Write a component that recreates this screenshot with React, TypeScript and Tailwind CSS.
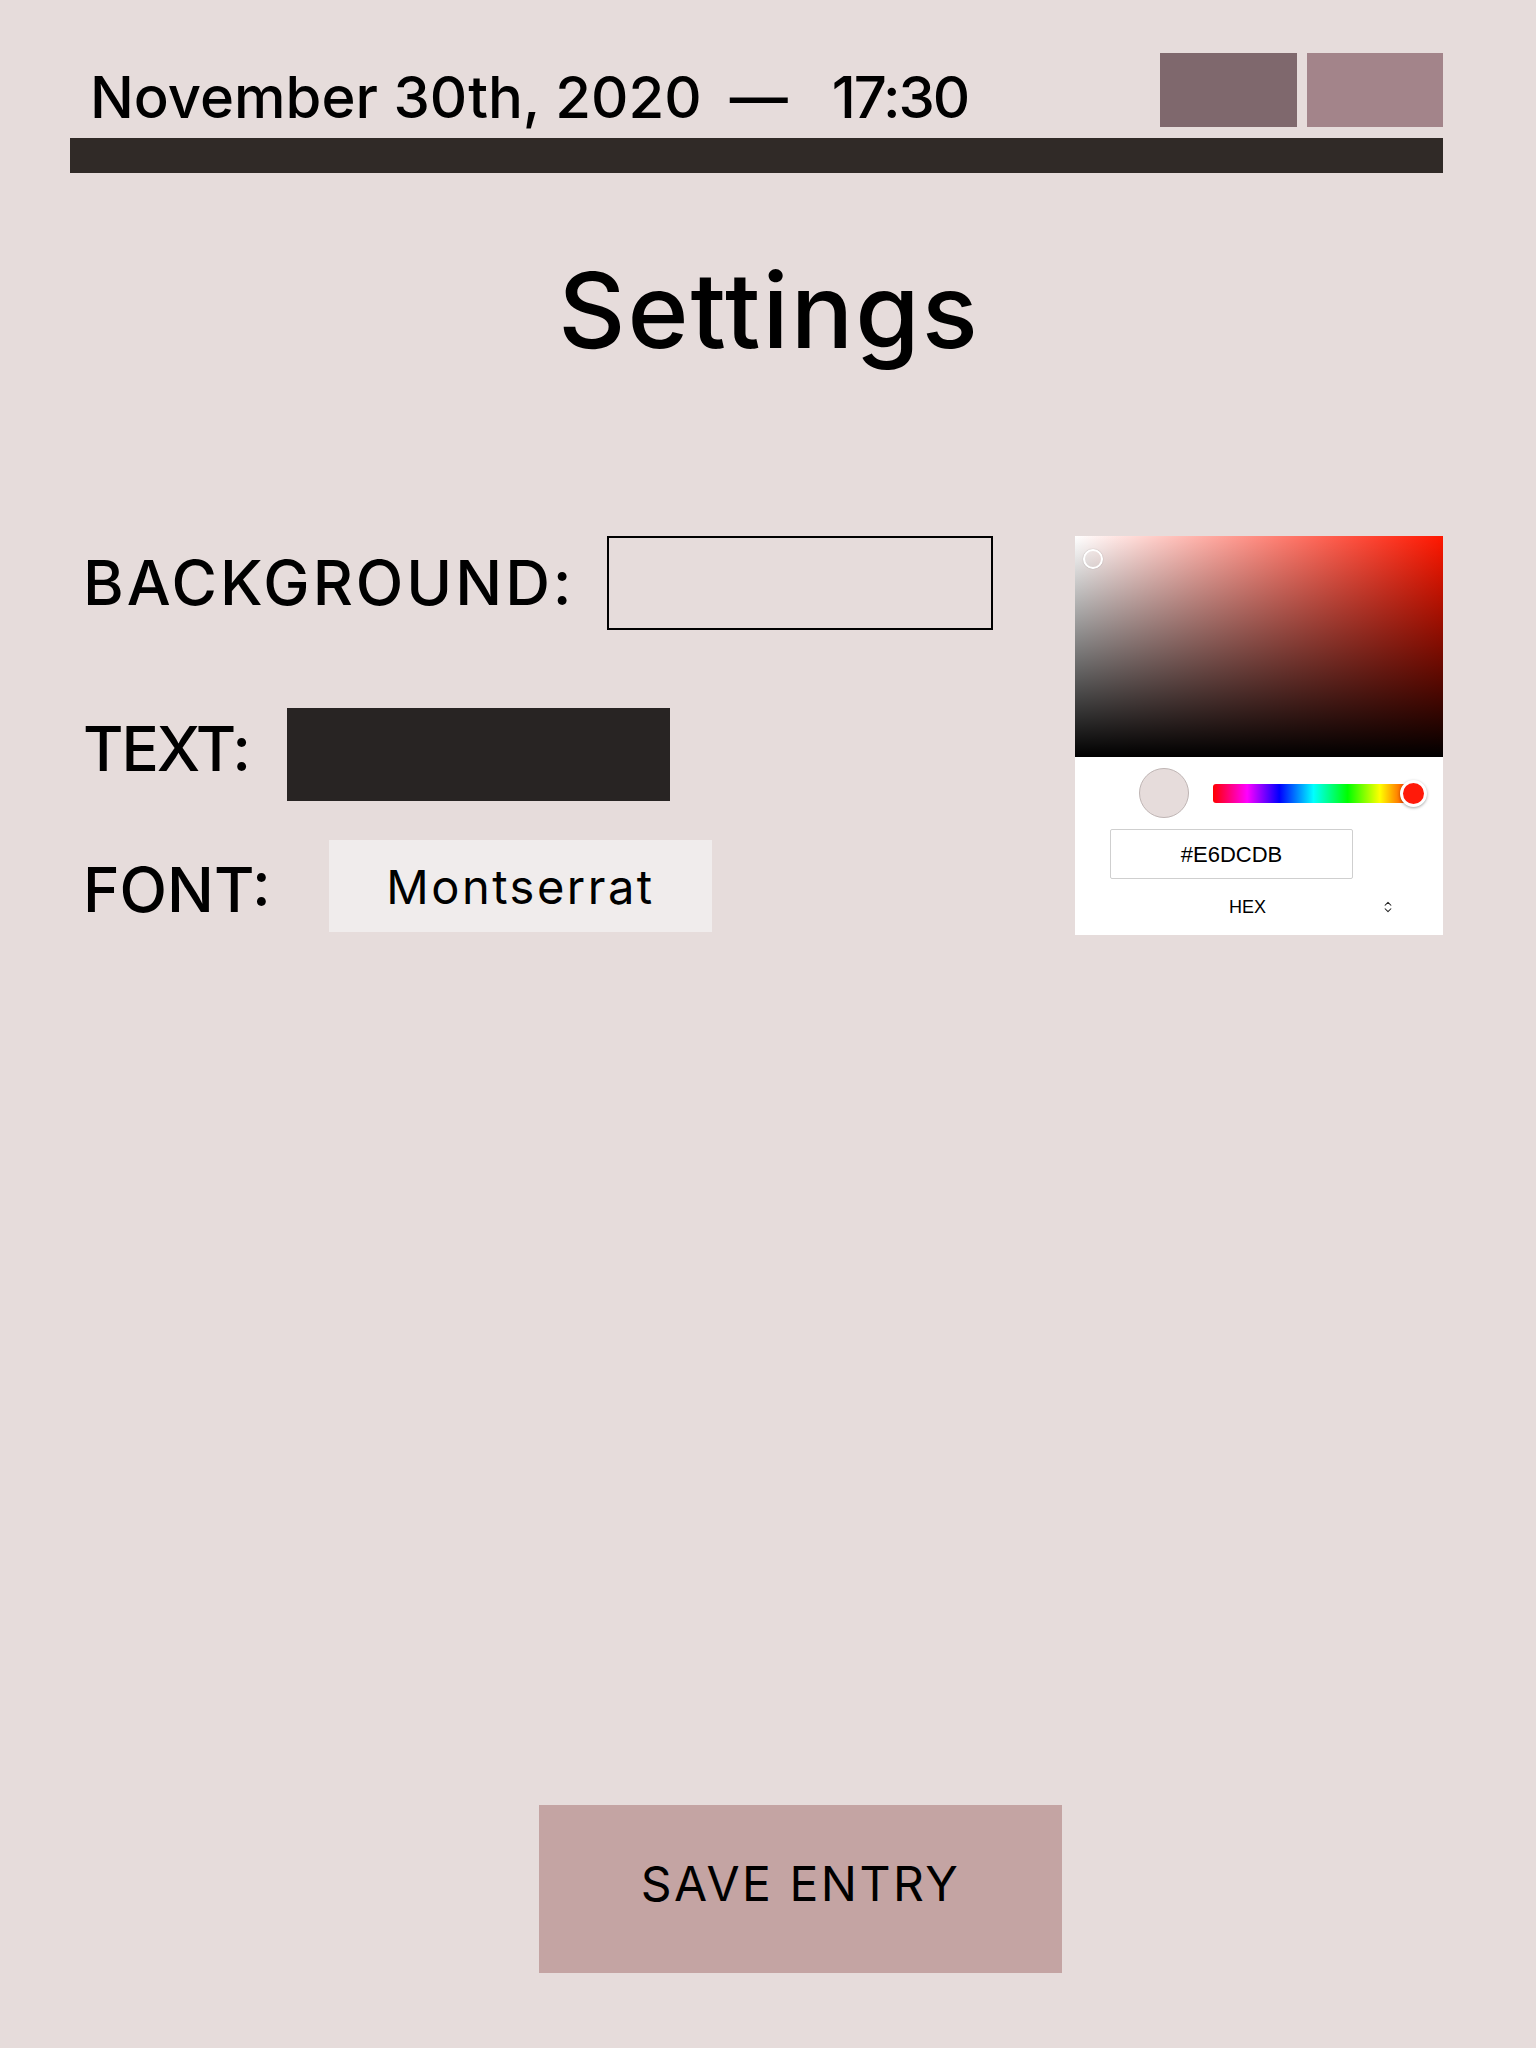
import { ChevronsUpDown } from 'lucide-react'

const font = { fontFamily: 'Inter, "Noto Sans", sans-serif' }

function ColorPicker() {
  return (
    <div className="w-[368px] bg-white">
      <div className="relative h-[221px] bg-[linear-gradient(to_right,#ffffff,#ff1700)]">
        <div className="absolute inset-0 bg-[linear-gradient(to_bottom,rgba(0,0,0,0),#000000)]" />
        <div className="absolute left-[8px] top-[13px] h-[20px] w-[20px] rounded-full border-2 border-white shadow-[0_0_1px_rgba(0,0,0,0.4)]" />
      </div>
      <div className="pb-[19px] pt-[11px]">
        <div className="flex items-center">
          <div className="ml-[64px] h-[50px] w-[50px] rounded-full border border-[#bfb5b4] bg-[#e6dcdb]" />
          <div className="relative ml-[24px] h-[19px] w-[201px] rounded-l-[3px] bg-[linear-gradient(to_right,#ff0000_0%,#ff00ff_17%,#0000ff_33%,#00ffff_50%,#00ff00_67%,#ffff00_83%,#ff8000_92%,#ff0000_100%)]">
            <div className="absolute right-[-13px] top-[-4px] h-[27px] w-[27px] rounded-full border-[3px] border-white bg-[#ff1a0a] shadow-[0_1px_3px_rgba(0,0,0,0.35)]" />
          </div>
        </div>
        <div className="ml-[35px] mt-[11px] flex h-[50px] w-[243px] items-center justify-center rounded-[2px] border border-[#cfcfcf] font-['Liberation_Sans',Arial,sans-serif] text-[22px] text-black">
          #E6DCDB
        </div>
        <div className="mt-[19px] flex items-center font-['Liberation_Sans',Arial,sans-serif] text-[18px] leading-none text-black">
          <span className="ml-[154px]">HEX</span>
          <ChevronsUpDown className="ml-[115px] h-[16px] w-[14px] text-[#222]" strokeWidth={1.8} />
        </div>
      </div>
    </div>
  )
}

export default function App() {
  return (
    <div className="min-h-[2048px] w-full bg-[#e6dcdb] text-black" style={font}>
      <div className="ml-[70px] w-[1373px] pt-[53px]">
        <header>
          <div className="flex items-start justify-between">
            <div className="mt-[15px] flex items-baseline pl-[20px] text-[58px] font-medium leading-none">
              <span>November 30th, 2020</span>
              <span className="ml-[28px]">—</span>
              <span className="ml-[44px] tracking-[-2px]">17:30</span>
            </div>
            <div className="flex gap-[10px]">
              <div className="h-[74px] w-[137px] bg-[#7f686d]" />
              <div className="h-[74px] w-[136px] bg-[#a3848a]" />
            </div>
          </div>
          <div className="mt-[11px] h-[35px] w-full bg-[#302a27]" />
        </header>

        <h1 className="mt-[85px] pl-[25px] text-center text-[104px] font-medium leading-none tracking-[2px]">
          Settings
        </h1>

        <section className="mt-[174px] flex items-start justify-between">
          <div className="pl-[13px] text-[62px] font-medium leading-none">
            <div className="flex items-center">
              <span className="w-[524px] tracking-[3px]">BACKGROUND:</span>
              <div className="h-[94px] w-[386px] border-2 border-black bg-[#e6dcdb]" />
            </div>
            <div className="mt-[78px] flex items-center">
              <span className="mb-[12px] w-[204px] tracking-[-2px]">TEXT:</span>
              <div className="h-[93px] w-[383px] bg-[#282423]" />
            </div>
            <div className="mt-[39px] flex items-center">
              <span className="mt-[8px] w-[246px]">FONT:</span>
              <div className="flex h-[92px] w-[383px] items-center justify-center bg-[#f0ecec] text-[47px] font-normal tracking-[2.5px]">
                Montserrat
              </div>
            </div>
          </div>
          <ColorPicker />
        </section>

        <button className="ml-[469px] mt-[870px] flex h-[168px] w-[523px] items-center justify-center bg-[#c4a4a3] pb-[10px] text-[48px] font-normal leading-none tracking-[2.5px] text-black">
          SAVE ENTRY
        </button>
      </div>
    </div>
  )
}
